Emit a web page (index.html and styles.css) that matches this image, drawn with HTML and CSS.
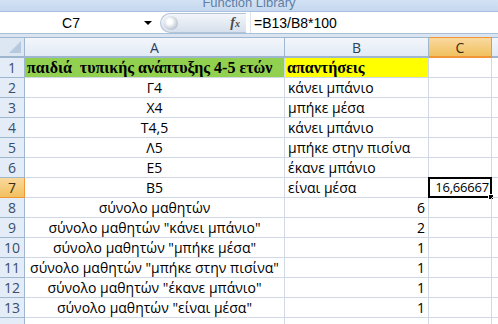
FILE: index.html
```html
<!DOCTYPE html>
<html>
	<head>
		<meta charset="UTF-8">
		<title>Φύλλο1</title>
		<link rel="stylesheet" href="styles.css">
	</head>
	<body>
		<div class="ribbon"><span>Function Library</span></div>

		<!--γραμμή τύπων-->
		<div class="fbar">
			<div class="namebox">C7</div>
			<div class="drop"></div>
			<div class="pill">
				<span class="knob"></span>
				<span class="fx">f<i>x</i></span>
			</div>
			<div class="formula">=B13/B8*100</div>
		</div>

		<!--φύλλο-->
		<div class="sheet">
			<div class="hd corner"><span></span></div>
			<div class="hd col">A</div>
			<div class="hd col">B</div>
			<div class="hd col on">C</div>
			<div class="hd col"></div>

			<div class="hd row">1</div>
			<div class="c title green">παιδιά&nbsp; τυπικής ανάπτυξης 4-5 ετών</div>
			<div class="c title yellow">απαντήσεις</div>
			<div class="c"></div><div class="c"></div>

			<div class="hd row">2</div>
			<div class="c mid">Γ4</div><div class="c">κάνει μπάνιο</div>
			<div class="c"></div><div class="c"></div>

			<div class="hd row">3</div>
			<div class="c mid">Χ4</div><div class="c">μπήκε μέσα</div>
			<div class="c"></div><div class="c"></div>

			<div class="hd row">4</div>
			<div class="c mid">Τ4,5</div><div class="c">κάνει μπάνιο</div>
			<div class="c"></div><div class="c"></div>

			<div class="hd row">5</div>
			<div class="c mid">Λ5</div><div class="c">μπήκε στην πισίνα</div>
			<div class="c"></div><div class="c"></div>

			<div class="hd row">6</div>
			<div class="c mid">Ε5</div><div class="c">έκανε μπάνιο</div>
			<div class="c"></div><div class="c"></div>

			<div class="hd row on">7</div>
			<div class="c mid">Β5</div><div class="c">είναι μέσα</div>
			<div class="c num sel">16,66667<span class="handle"></span></div><div class="c"></div>

			<div class="hd row">8</div>
			<div class="c mid">σύνολο μαθητών</div><div class="c num">6</div>
			<div class="c"></div><div class="c"></div>

			<div class="hd row">9</div>
			<div class="c mid">σύνολο μαθητών "κάνει μπάνιο"</div><div class="c num">2</div>
			<div class="c"></div><div class="c"></div>

			<div class="hd row">10</div>
			<div class="c mid">σύνολο μαθητών "μπήκε μέσα"</div><div class="c num">1</div>
			<div class="c"></div><div class="c"></div>

			<div class="hd row">11</div>
			<div class="c mid">σύνολο μαθητών "μπήκε στην πισίνα"</div><div class="c num">1</div>
			<div class="c"></div><div class="c"></div>

			<div class="hd row">12</div>
			<div class="c mid">σύνολο μαθητών "έκανε μπάνιο"</div><div class="c num">1</div>
			<div class="c"></div><div class="c"></div>

			<div class="hd row">13</div>
			<div class="c mid">σύνολο μαθητών "είναι μέσα"</div><div class="c num">1</div>
			<div class="c"></div><div class="c"></div>

			<div class="hd row"></div>
			<div class="c"></div><div class="c"></div>
			<div class="c"></div><div class="c"></div>
		</div>
	</body>
</html>
```

FILE: styles.css
```css
*{
	margin: 0;
	padding: 0;
	box-sizing: border-box;
}
body{
	width: 498px;
	height: 324px;
	overflow: hidden;
	background: #dbe5f1;
	font-family: "Open Sans", "Liberation Sans", sans-serif;
	font-size: 14px;
	color: #000;
}

/*ribbon*/
.ribbon{
	height: 12px;
	background: linear-gradient(to bottom, #d3e2f4, #c5d8ef);
	border-bottom: 1px solid #a9c1de;
	text-align: center;
	overflow: hidden;
	line-height: 12px;
}
.ribbon span{
	display: inline-block;
	transform: translateY(-4px);
	font-family: "Liberation Sans", sans-serif;
	font-size: 13px;
	color: #5f7fa6;
}

/*formula bar*/
.fbar{
	height: 22px;
	display: flex;
	align-items: center;
	background: #fff;
	border-bottom: 1px solid #a9bfd6;
}
.namebox{
	width: 142px;
	text-align: center;
	font-family: "Liberation Sans", sans-serif;
	font-size: 14px;
}
.drop{
	width: 0;
	height: 0;
	border-left: 4px solid transparent;
	border-right: 4px solid transparent;
	border-top: 4px solid #000;
	margin-left: 2px;
}
.pill{
	margin-left: 8px;
	width: 86px;
	height: 20px;
	border-radius: 10px 0 0 10px;
	background: linear-gradient(to bottom, #f3f6fa, #d6e0ec);
	border: 1px solid #b4c4d8;
	border-right: none;
	display: flex;
	align-items: center;
	justify-content: space-between;
	padding: 0 6px 0 3px;
}
.knob{
	width: 14px;
	height: 14px;
	border-radius: 50%;
	background: radial-gradient(circle at 40% 40%, #fff 20%, #c9d1db 60%, #9aa5b3);
}
.fx{
	font-family: "Liberation Serif", serif;
	font-style: italic;
	font-weight: bold;
	font-size: 14px;
	color: #4a4a4a;
}
.fx i{
	font-size: 10px;
}
.formula{
	margin-left: 4px;
	padding-left: 3px;
	height: 100%;
	line-height: 22px;
	flex: 1;
	border-left: 1px solid #dde3ea;
	font-family: "Liberation Sans", sans-serif;
	font-size: 14px;
}

/*sheet*/
.sheet{
	margin-top: 3px;
	display: grid;
	grid-template-columns: 25px 260px 144px 63px 1fr;
	grid-template-rows: 21px repeat(14, 20px);
	background: #fff;
}
.hd{
	background: linear-gradient(to bottom, #f3f6fb, #e2eaf5);
	border-right: 1px solid #9eb6ce;
	border-bottom: 1px solid #9eb6ce;
	color: #2a3f5c;
	font-size: 14px;
	display: flex;
	align-items: center;
	justify-content: center;
}
.hd.col{
	border-top: 1px solid #9eb6ce;
	border-bottom: 2px solid #9eb6ce;
}
.hd.row{
	background: #e4ecf7;
	color: #3a4e6a;
}
.hd.on{
	background: linear-gradient(to bottom, #f9d99f, #f1c15f);
	border-color: #f29536;
	color: #3a2a10;
}
.corner{
	border-top: 1px solid #9eb6ce;
	border-bottom: 2px solid #9eb6ce;
	position: relative;
	background: #dde7f3;
}
.corner span{
	position: absolute;
	right: 3px;
	bottom: 3px;
	width: 0;
	height: 0;
	border-left: 12px solid transparent;
	border-bottom: 12px solid #b7c9de;
}

.c{
	border-right: 1px solid #d0d7e5;
	border-bottom: 1px solid #d0d7e5;
	padding: 0 3px;
	line-height: 19px;
	white-space: nowrap;
	position: relative;
}
.mid{
	text-align: center;
}
.num{
	text-align: right;
}
.title{
	font-family: "Liberation Serif", serif;
	font-weight: bold;
	font-size: 16px;
	padding-left: 2px;
}
.green{
	background: #92d050;
}
.yellow{
	background: #ffff00;
}
.sel{
	border: 2px solid #000;
	margin: -1px 0 0 -1px;
	line-height: 17px;
	padding: 0 1px 0 0;
	font-size: 13px;
	letter-spacing: -0.2px;
}
.handle{
	position: absolute;
	right: -4px;
	bottom: -4px;
	width: 6px;
	height: 6px;
	background: #000;
	border: 1px solid #fff;
}
```
